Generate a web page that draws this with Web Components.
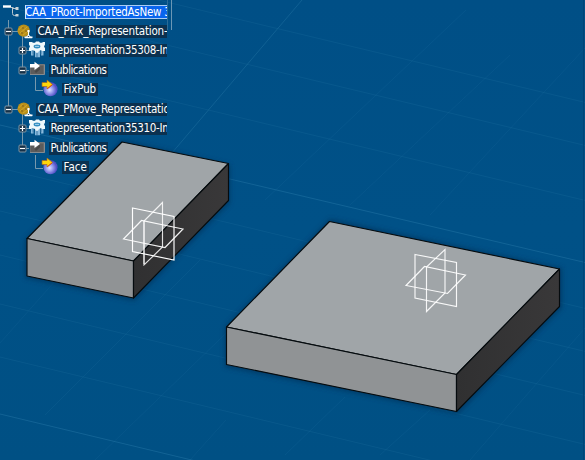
<!DOCTYPE html>
<html lang="en"><head><meta charset="utf-8"><title>Assembly viewer</title>
<style>body{margin:0;overflow:hidden;background:#005087}</style></head><body>
<assembly-view>
<model-scene></model-scene>
<spec-tree slot="tree">
<tree-node kind="root" level="0" fit="145.5">CAA_PRoot-ImportedAsNew 3</tree-node>
<tree-node kind="part" level="1" sign="-" fit="130">CAA_PFix_Representation-</tree-node>
<tree-node kind="gear" level="2" sign="+" trunk fit="121.5">Representation35308-Im</tree-node>
<tree-node kind="folder" level="2" sign="-" trunk end fit="56">Publications</tree-node>
<tree-node kind="pub" level="3" trunk fit="32.5">FixPub</tree-node>
<tree-node kind="part" level="1" sign="-" last fit="132">CAA_PMove_Representatio</tree-node>
<tree-node kind="gear" level="2" sign="+" fit="121.5">Representation35310-Im</tree-node>
<tree-node kind="folder" level="2" sign="-" end fit="56">Publications</tree-node>
<tree-node kind="pub" level="3" fit="23.5">Face</tree-node>
</spec-tree>
</assembly-view>
<script>
class AssemblyView extends HTMLElement{
  constructor(){super();this.attachShadow({mode:'open'}).innerHTML=`<style>
:host{display:grid;width:585px;height:460px;overflow:hidden;background:linear-gradient(#004f86,#005187 50%,#005084)}
slot{display:contents}::slotted(*){grid-area:1/1}</style><slot></slot><slot name="tree"></slot>`}
}
customElements.define('assembly-view',AssemblyView);

class SpecTree extends HTMLElement{
  constructor(){super();this.attachShadow({mode:'open'}).innerHTML=`<style>
:host{display:grid;grid-template-columns:167px 5px;align-items:start;height:184px;width:172px}
.rows{display:flex;flex-direction:column;padding-top:2.300px;overflow:hidden;width:167px}
.edge{height:30px;width:3px;border-left:1px solid #2b6b96;border-right:1px solid #6b97b5}</style>
<div class="rows"><slot></slot></div><div class="edge"></div>`}
}
customElements.define('spec-tree',SpecTree);

const icons={
root:`<path d="M3 3.500H11" stroke="#fff" stroke-width="2.400"/><path d="M10 4.500H13.500M12.500 5V10.500Q12.500 12.500 14.500 12.500H17M12.500 5.500H16" fill="none" stroke="#b9c7cf"/><path d="M15.500 4h3v3h-3zM15.500 11h3v2.500h-3z" fill="#c7d3d8"/>`,
part:`<g transform="translate(0 -.9)"><circle cx="23.700" cy="9.500" r="6.200" fill="#b98f18"/><path d="M18.500 9l4-4M20 12l7-6M23 14l6-5" stroke="#d5ad32" stroke-width=".8"/><path d="M22 6h2v2h-2zM25 9h2v2h-2zM21 11h2v2h-2z" fill="#9d7819"/><path d="M28.500 10v4l-2.500 2.500h5l-2.500-2.500" fill="#163953" stroke="#fff" stroke-width="1.100"/><path d="M27.500 9h2v2h-2zM24.500 15.500h2v1.500h-2zM30.500 15.500h2v1.500h-2z" fill="#fff"/></g>`,
gear:`<g transform="scale(1 .9)"><path d="M31 7v9h2.500V8zM35 9v9h5V9zM41 8v8h2.500V7z" fill="#88b9dc"/><path d="M33 10v5M37 12v6M41 9v6" stroke="#3d78a2"/><path d="M29 1h3l1 1h2l1-1.500h3l1 1.500h2l1-1h2v3l-1 2 1 2v3h-3l-1-1-2 1-1 2h-2l-1-2-3-1-1 1h-2V8l1-2-1-2z" fill="#eef8fb"/><ellipse cx="37" cy="6" rx="3.400" ry="2.200" fill="#308cc0"/><path d="M35 6h4" stroke="#acd7ef"/></g>`,
folder:`<path d="M30 3h14.500v11H30z" fill="#777"/><path d="M30.500 4.500h13V13h-13z" fill="#5c5c5c"/><path d="M30 13.500h14.500V3.500" fill="none" stroke="#858b90"/><path d="M30 3h4.500V.8L40 5l-5.500 4V6.500H30z" fill="#fff"/><path d="M34.500 10.500l5.500-5v3L36 12z" fill="#484848"/>`,
pub:`<circle cx="50.500" cy="9.200" r="7" fill="url(#ball)"/><path d="M42 2.500h5V0l5.500 4.500L47 9V6.500h-5z" fill="#ffd60a" stroke="#a86522" stroke-width=".7"/><path d="M47.500 8.500L52 5" stroke="#e14a12"/>`
};
class TreeNode extends HTMLElement{
  constructor(){super();this.attachShadow({mode:'open'}).innerHTML=`<style>
:host{display:flex;align-items:center;height:19.45px;flex:none}
svg{display:block;height:19px;flex:none;overflow:visible}
.label{font:11.500px/13px "DejaVu Sans Condensed","DejaVu Sans",sans-serif;font-stretch:condensed;color:#fff;white-space:pre;background:#0b3150;padding:0 1.5px;height:13px;flex:none}
:host([kind=root]) .label{background:#0965ed;padding-left:0;height:14px;line-height:14px;box-shadow:inset 1px 0 #cde4ff,inset 0 1px #a9ccf4,inset 0 -1px #a9ccf4}
</style><svg></svg><span class="label"><slot></slot></span>`}
  connectedCallback(){
    const g=n=>this.getAttribute(n), lv=+g('level'), svg=this.shadowRoot.querySelector('svg');
    svg.setAttribute('width',[25,36,49,62][lv]);
    const x=lv===1?8.5:22.5;
    let s=`<defs><radialGradient id="ball" cx=".43" cy=".55"><stop stop-color="#e3e3ff"/><stop offset=".45" stop-color="#9da2ef"/><stop offset="1" stop-color="#514fc5"/></radialGradient></defs><g stroke="#7698ad">`;
    if(lv===0)s+='<path d="M8.500 17V20"/>';
    if(this.hasAttribute('trunk'))s+='<path d="M8.500 0V20"/>';
    if(lv===1)s+=`<path d="M8.500 0V${this.hasAttribute('last')?10:20}M8 9.500H18M22.500 14V20"/>`;
    if(lv===2)s+=`<path d="M22.500 0V${this.hasAttribute('end')?10:20}M22 9.500H29"/>`;
    if(lv===2&&this.hasAttribute('end'))s+='<path d="M35.500 16V20"/>';
    if(lv===3)s+='<path d="M35.500 0V10.500H43" fill="none"/>';
    s+='</g>';
    if(g('sign'))s+=`<rect x="${x-3.5}" y="6" width="7" height="7" rx="1" fill="#153149" stroke="#8095a3"/><path d="M${x-2.5} 9.500h5${g('sign')==='+'?`M${x} 7v5`:''}" stroke="#fff" stroke-width="1.200"/>`;
    svg.innerHTML=s+icons[g('kind')];
    const label=this.shadowRoot.querySelector('.label'),n=this.textContent.length;
    const r=document.createRange();r.selectNodeContents(this);
    label.style.letterSpacing=((+g('fit')-r.getBoundingClientRect().width)/n)+'px';
  }
}
customElements.define('tree-node',TreeNode);

class ModelScene extends HTMLElement{
  constructor(){super();
  const down=[[-38,.24],[5,.24],[60,.24],[125,.235,1],[168,.24],[211,.24],[255,.24],[304,.24],[357,.24],[414,.24,1]].map(([y,m,b])=>`<path d="M0 ${y}L585 ${y+585*m}" opacity="${b?.5:.22}"/>`).join('');
  this.attachShadow({mode:'open'}).innerHTML=`<style>:host{display:block;width:585px;height:460px}svg{display:block}</style>
<svg width="585" height="460" viewBox="0 0 585 460">
<defs><filter id="soft"><feGaussianBlur stdDeviation="2.500"/></filter>
<linearGradient id="dark" x1="0" x2="1"><stop stop-color="#303031"/><stop offset="1" stop-color="#393839"/></linearGradient></defs>
<g fill="none" stroke="#2476a5">${down}
<path d="M168.500 157L302 0" opacity=".45"/>
<path d="M0 343L72 262M265 200L466 10M430 215L585 48M45 415L200 260M95 460L250 310M190 460L226 420M350 205L510 55M470 460L585 328M285 455L345 397M380 455L430 410" opacity=".16"/></g>
<path d="M583.500 0V460" stroke="#004172" opacity=".7"/>
<g fill="#00355f" filter="url(#soft)" opacity=".75"><path d="M25 240V278L134 301L230 203V165L122 140z"/><path d="M225 327V367L458 414L562 308V268L330 219z"/></g>
<g stroke="#050b0e" stroke-width="1.150" stroke-linejoin="round">
<path d="M122 142L228.500 163.500L133.500 261L27 238.500z" fill="#a0a5a8"/>
<path d="M27 238.500L133.500 261V298L27 276z" fill="#909395"/>
<path d="M228.500 163.500V200.500L133.500 298V261z" fill="url(#dark)"/>
<path d="M329.500 221.500L559.500 269L456.500 374.500L226.500 327z" fill="#a0a5a8"/>
<path d="M226.500 327L456.500 374.500V411.500L226.500 364.500z" fill="#909395"/>
<path d="M559.500 269V306.500L456.500 411.500V374.500z" fill="url(#dark)"/></g>
<g fill="none" stroke="#fff" stroke-width="1.150">
<path d="M132.500 208L174 216.500V260L132.500 251.500z"/><path d="M123.500 239L141.500 220.500L183 229L165 247.500z" opacity=".93"/><path d="M162.500 202.500V247L144 265V221z" opacity=".85"/><path d="M144 221V264" stroke-width="1.800" opacity=".45"/>
<path d="M415 254.500L456.500 262.500V306.500L415 298z" opacity=".92"/><path d="M406 285.500L424.500 266.500L465.500 275L447.500 293.500z" opacity=".93"/><path d="M445 249.500V293L426.500 311.500V267z" opacity=".9"/></g>
</svg>`}
}
customElements.define('model-scene',ModelScene);
</script></body></html>
